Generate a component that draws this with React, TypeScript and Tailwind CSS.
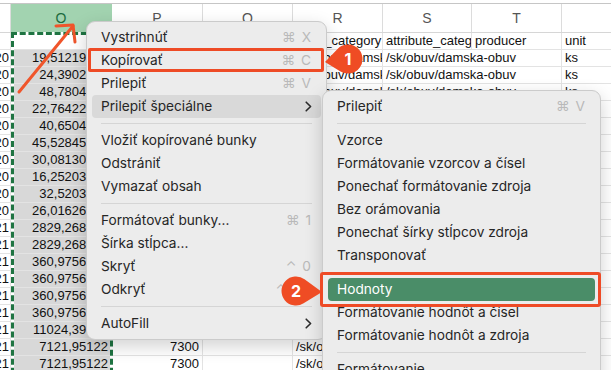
import { ReactNode } from 'react';

const COLS = [11, 101, 91, 90, 90, 89, 90, 120];
const HEAD = ['', 'O', 'P', 'Q', 'R', 'S', 'T', 'U'];

const oValues = [
  '',
  '19,51219512',
  '24,3902439',
  '48,7804878',
  '22,76422764',
  '40,6504065',
  '45,52845528',
  '30,08130081',
  '16,25203252',
  '32,5203252',
  '26,01626016',
  '2829,268293',
  '2829,268293',
  '360,9756098',
  '360,9756098',
  '360,9756098',
  '360,9756098',
  '11024,39024',
  '7121,95122',
  '7121,95122',
];

type Row = { year: string; o: string; p: string; r: string; s: string; t: string; u: string };

const rows: Row[] = oValues.map((o, i) => ({
  year: i === 0 ? '' : i <= 10 ? '2020' : '2021',
  o,
  p: i >= 18 ? '7300' : '',
  r: i === 0 ? 'main_category' : '/sk/obuv/damska-obuv',
  s: i === 0 ? 'attribute_category' : '/sk/obuv/damska-obuv',
  t: i === 0 ? 'producer' : '',
  u: i === 0 ? 'unit' : 'ks',
}));

function Cell({ w, right, children, className = 'px-[3px]' }: { w: number; right?: boolean; children?: ReactNode; className?: string }) {
  return (
    <div
      style={{ width: w }}
      className={`h-full shrink-0 flex items-center overflow-hidden whitespace-nowrap border-r border-[#e3e3e3] ${right ? 'justify-end' : 'justify-start'} ${className}`}
    >
      {children}
    </div>
  );
}

function Chevron() {
  return (
    <svg width="7" height="11" viewBox="0 0 7 11" fill="none">
      <path d="M1.2 1.2 L5.6 5.5 L1.2 9.8" stroke="#2b2b2b" strokeWidth="1.6" strokeLinecap="round" strokeLinejoin="round" />
    </svg>
  );
}

function Item({ label, shortcut, sub, active, green }: { label: string; shortcut?: string; sub?: boolean; active?: boolean; green?: boolean }) {
  return (
    <div
      className={`mx-[5px] h-[23px] px-[9px] rounded-[4px] flex items-center justify-between whitespace-nowrap ${
        green ? 'bg-[#4a8d68] text-white' : active ? 'bg-[#d9d9d9] text-[#262626]' : 'text-[#262626]'
      }`}
    >
      <span>{label}</span>
      {shortcut && <span className="text-[#b9b9b9] tracking-[1px]">{shortcut}</span>}
      {sub && <Chevron />}
    </div>
  );
}

function Sep() {
  return <div className="mx-[14px] my-[5px] h-px bg-[#d5d5d5]" />;
}

function Badge({ n, cx, cy, tx, ty, left, top }: { n: string; cx: number; cy: number; tx: number; ty: number; left: number; top: number }) {
  const r = 14.5;
  const dx = tx - cx;
  const dy = ty - cy;
  const d = Math.hypot(dx, dy);
  const base = Math.atan2(dy, dx);
  const th = Math.acos(r / d);
  const p1 = [cx + r * Math.cos(base + th), cy + r * Math.sin(base + th)];
  const p2 = [cx + r * Math.cos(base - th), cy + r * Math.sin(base - th)];
  return (
    <svg className="absolute" style={{ left, top }} width="50" height="40" viewBox={`${left} ${top} 50 40`}>
      <path d={`M${tx} ${ty} L${p1[0]} ${p1[1]} A${r} ${r} 0 1 1 ${p2[0]} ${p2[1]} Z`} fill="#ef4c24" />
      <text x={cx} y={cy + 5.5} textAnchor="middle" fill="#fff" fontSize="16" fontWeight="700" fontFamily="Inter, sans-serif">
        {n}
      </text>
    </svg>
  );
}

export default function App() {
  return (
    <div className="relative w-[611px] h-[370px] overflow-hidden bg-white font-['Liberation_Sans',Arial,sans-serif] text-[13px] text-[#111]">
      {/* sheet */}
      <div className="pt-[3px]">
        <div className="border-t border-[#c6c6c6] h-[30px] border-b border-b-[#d6d6d6] flex text-[14px] text-[#555]">
          {HEAD.map((h, i) => (
            <div
              key={i}
              style={{ width: COLS[i] }}
              className={`h-full shrink-0 flex items-center justify-center border-r ${
                i === 1 ? 'bg-[#a2d3b0] text-[#1d6b3e] border-[#a2d3b0]' : 'border-[#dcdcdc]'
              }`}
            >
              {h}
            </div>
          ))}
        </div>
        {rows.map((row, i) => (
          <div key={i} className="h-[17px] flex border-b border-[#e3e3e3] leading-[16px]">
            <Cell w={COLS[0]} right className="pr-px">
              {row.year}
            </Cell>
            <Cell w={COLS[1]} right className={i === 0 ? 'px-[3px]' : 'px-[3px] bg-[#d8d8d8]'}>
              {row.o}
            </Cell>
            <Cell w={COLS[2]} right>
              {row.p}
            </Cell>
            <Cell w={COLS[3]} />
            <Cell w={COLS[4]}>{row.r}</Cell>
            {i === 0 ? (
              <>
                <Cell w={COLS[5]}>{row.s}</Cell>
                <Cell w={COLS[6]}>{row.t}</Cell>
              </>
            ) : (
              <Cell w={COLS[5] + COLS[6]}>{row.s}</Cell>
            )}
            <Cell w={COLS[7]}>{row.u}</Cell>
          </div>
        ))}
      </div>

      {/* copy marquee on column O */}
      <div className="absolute left-[11px] top-[32px] w-[102px] h-[360px] border-[3px] border-white" />
      <div className="absolute left-[11px] top-[32px] w-[102px] h-[360px] border-[3px] border-dashed border-[#1f7442]" />

      {/* arrow */}
      <svg className="absolute left-0 top-0" width="100" height="100" viewBox="0 0 100 100" fill="none">
        <path d="M19 92 L73 26" stroke="#f0552b" strokeWidth="3" strokeLinecap="round" />
        <path d="M56 26 L73 25 L75 42" stroke="#f0552b" strokeWidth="3" strokeLinecap="round" strokeLinejoin="round" />
      </svg>

      {/* context menu */}
      <div className="absolute left-[86px] top-[21px] w-[241px] rounded-[9px] bg-[#ececec] border border-[#cbcbcb] shadow-[0_6px_18px_rgba(0,0,0,0.18)] py-[4px] font-['Inter',sans-serif] text-[13.7px]">
        <Item label="Vystrihnúť" shortcut="⌘ X" />
        <Item label="Kopírovať" shortcut="⌘ C" />
        <Item label="Prilepiť" shortcut="⌘ V" />
        <Item label="Prilepiť špeciálne" sub active />
        <Sep />
        <Item label="Vložiť kopírované bunky" />
        <Item label="Odstrániť" />
        <Item label="Vymazať obsah" />
        <Sep />
        <Item label="Formátovať bunky..." shortcut="⌘ 1" />
        <Item label="Šírka stĺpca..." />
        <Item label="Skryť" shortcut="⌃ 0" />
        <Item label="Odkryť" shortcut="⌃⇧0" />
        <Sep />
        <Item label="AutoFill" sub />
      </div>

      {/* paste special submenu */}
      <div className="absolute left-[322px] top-[90px] w-[279px] h-[300px] rounded-[9px] bg-[#ececec] border border-[#cbcbcb] shadow-[0_6px_18px_rgba(0,0,0,0.18)] py-[4px] font-['Inter',sans-serif] text-[13.7px]">
        <Item label="Prilepiť" shortcut="⌘ V" />
        <Sep />
        <Item label="Vzorce" />
        <Item label="Formátovanie vzorcov a čísel" />
        <Item label="Ponechať formátovanie zdroja" />
        <Item label="Bez orámovania" />
        <Item label="Ponechať šírky stĺpcov zdroja" />
        <Item label="Transponovať" />
        <Sep />
        <Item label="Hodnoty" green />
        <Item label="Formátovanie hodnôt a čísel" />
        <Item label="Formátovanie hodnôt a zdroja" />
        <Sep />
        <Item label="Formátovanie" />
      </div>

      {/* annotations */}
      <div className="absolute left-[88px] top-[48px] w-[236px] h-[24px] border-[3px] border-[#ee4b26] rounded-[2px]" />
      <div className="absolute left-[320px] top-[272px] w-[281px] h-[35px] border-[3px] border-[#ee4b26] rounded-[3px]" />
      <Badge n="1" cx={348} cy={59} tx={325} ty={62} left={320} top={40} />
      <Badge n="2" cx={296} cy={291} tx={322} ty={292} left={278} top={272} />
    </div>
  );
}
